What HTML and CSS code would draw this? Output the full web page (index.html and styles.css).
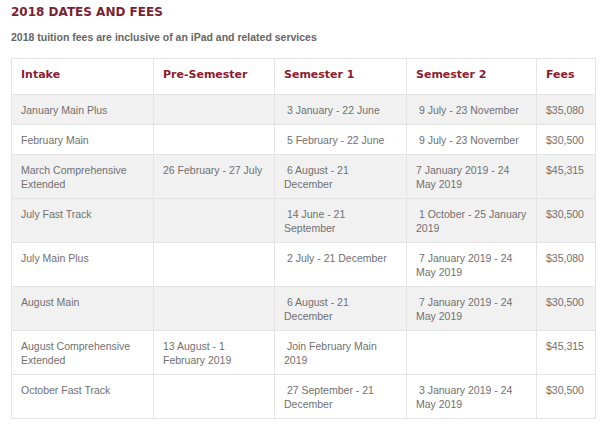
FILE: index.html
```html
<!DOCTYPE html>
<html>
<head>
<meta charset="utf-8">
<link rel="stylesheet" href="styles.css">
</head>
<body>
<h2 class="title">2018 DATES AND FEES</h2>
<p class="subtitle">2018 tuition fees are inclusive of an iPad and related services</p>
<table class="fees">
<colgroup>
<col class="c1"><col class="c2"><col class="c3"><col class="c4"><col class="c5">
</colgroup>
<thead>
<tr><th>Intake</th><th>Pre-Semester</th><th>Semester 1</th><th>Semester 2</th><th>Fees</th></tr>
</thead>
<tbody>
<tr class="alt"><td>January Main Plus</td><td></td><td>&nbsp;3 January - 22 June</td><td>&nbsp;9 July - 23 November</td><td>$35,080</td></tr>
<tr><td>February Main</td><td></td><td>&nbsp;5 February - 22 June</td><td>&nbsp;9 July - 23 November</td><td>$30,500</td></tr>
<tr class="alt"><td>March Comprehensive Extended</td><td>26 February - 27 July</td><td>&nbsp;6 August - 21 December</td><td>7 January 2019 - 24 May 2019</td><td>$45,315</td></tr>
<tr class="alt"><td>July Fast Track</td><td></td><td>&nbsp;14 June - 21 September</td><td>&nbsp;1 October - 25 January 2019</td><td>$30,500</td></tr>
<tr><td>July Main Plus</td><td></td><td>&nbsp;2 July - 21 December</td><td>&nbsp;7 January 2019 - 24 May 2019</td><td>$35,080</td></tr>
<tr class="alt"><td>August Main</td><td></td><td>&nbsp;6 August - 21 December</td><td>&nbsp;7 January 2019 - 24 May 2019</td><td>$30,500</td></tr>
<tr><td>August Comprehensive Extended</td><td>13 August - 1 February 2019</td><td>&nbsp;Join February Main 2019</td><td></td><td>$45,315</td></tr>
<tr><td>October Fast Track</td><td></td><td>&nbsp;27 September - 21 December</td><td>&nbsp;3 January 2019 - 24 May 2019</td><td>$30,500</td></tr>
</tbody>
</table>
</body>
</html>
```
FILE: styles.css
```css
html, body {
  margin: 0;
  padding: 0;
  background: #ffffff;
}
body {
  padding: 0 5px 0 11px;
  font-family: "Liberation Sans", Arial, sans-serif;
}
.title {
  margin: 0;
  padding-top: 5px;
  font-family: "DejaVu Sans", Verdana, sans-serif;
  font-weight: bold;
  font-size: 12px;
  line-height: 14px;
  color: #7a2232;
}
.subtitle {
  margin: 12px 0 0;
  font-size: 10.5px;
  line-height: 13px;
  font-weight: bold;
  color: #666666;
}
.fees {
  margin-top: 14px;
  width: 584px;
  border-collapse: collapse;
  table-layout: fixed;
  border: 1px solid #e4e4e4;
}
.c1 { width: 142px; }
.c2 { width: 121px; }
.c3 { width: 132px; }
.c4 { width: 130px; }
.c5 { width: 59px; }
.fees th {
  text-align: left;
  font-family: "DejaVu Sans", Verdana, sans-serif;
  font-weight: bold;
  font-size: 11px;
  color: #8b1c30;
  padding: 9px 9px 12px;
  line-height: 14px;
  border: 1px solid #e4e4e4;
  background: #ffffff;
}
.fees td {
  vertical-align: top;
  font-size: 10.5px;
  line-height: 14px;
  color: #707070;
  padding: 8px 9px 7px;
  border: 1px solid #e4e4e4;
}
.fees tr.alt td {
  background: #f1f1f1;
}
```
